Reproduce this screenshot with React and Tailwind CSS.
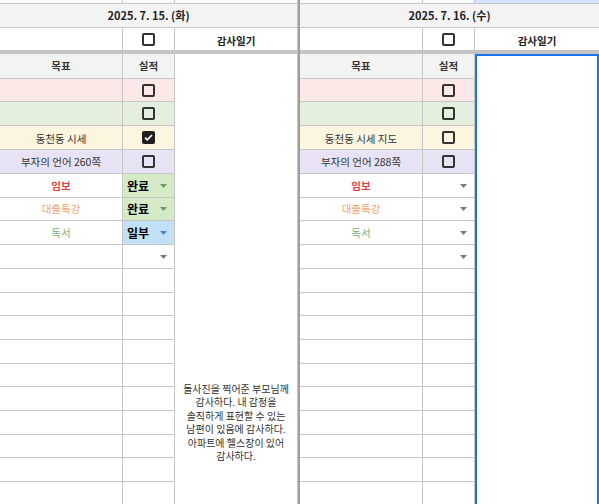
import React from "react";

// grid line colour used by every cell
const LINE = "border-[#c6c6c6]";

const rowHeights = [
  "h-[23px]", "h-[24px]", "h-[24px]", "h-[24px]", "h-[24px]", "h-[23px]",
  "h-[24px]", "h-[24px]", "h-[24px]", "h-[23px]", "h-[24px]", "h-[24px]",
  "h-[23px]", "h-[24px]", "h-[24px]", "h-[23px]", "h-[24px]", "h-[23px]",
];

const days = [
  {
    date: "2025. 7. 15. (화)",
    selected: false,
    goals: [
      { text: "", bg: "bg-[#fce8e6]", checked: false },
      { text: "", bg: "bg-[#e4efde]", checked: false },
      { text: "동천동 시세", bg: "bg-[#fdf6df]", checked: true },
      { text: "부자의 언어 260쪽", bg: "bg-[#e7e3f4]", checked: false },
    ],
    status: [
      { value: "완료", cell: "bg-[#d5ebc8]", arrow: "#6f9a5c" },
      { value: "완료", cell: "bg-[#d5ebc8]", arrow: "#6f9a5c" },
      { value: "일부", cell: "bg-[#c2e1f5]", arrow: "#4a86c5" },
    ],
    diary:
      "돌사진을 찍어준 부모님께 감사하다. 내 감정을 솔직하게 표현할 수 있는 남편이 있음에 감사하다. 아파트에 헬스장이 있어 감사하다.",
  },
  {
    date: "2025. 7. 16. (수)",
    selected: true,
    goals: [
      { text: "", bg: "bg-[#fce8e6]", checked: false },
      { text: "", bg: "bg-[#e4efde]", checked: false },
      { text: "동천동 시세 지도", bg: "bg-[#fdf6df]", checked: false },
      { text: "부자의 언어 288쪽", bg: "bg-[#e7e3f4]", checked: false },
    ],
    status: [
      { value: "", cell: "bg-white", arrow: "#7a7a7a" },
      { value: "", cell: "bg-white", arrow: "#7a7a7a" },
      { value: "", cell: "bg-white", arrow: "#7a7a7a" },
    ],
    diary: "",
  },
];

const habits = [
  { text: "임보", color: "text-[#ee3b3b] font-bold" },
  { text: "대출특강", color: "text-[#f5a36f]" },
  { text: "독서", color: "text-[#79b07c]" },
];

const Arrow = ({ color }) => (
  <svg width="7" height="4" viewBox="0 0 7 4">
    <path d="M0 0h7L3.5 4z" fill={color} />
  </svg>
);

const CheckBox = ({ checked }) =>
  checked ? (
    <span className="flex h-[13px] w-[13px] items-center justify-center rounded-[2px] bg-[#1f1f1f]">
      <svg width="9" height="7" viewBox="0 0 9 7">
        <path d="M1 3.6l2.3 2.2L8 1" fill="none" stroke="white" strokeWidth="1.7" />
      </svg>
    </span>
  ) : (
    <span className="h-[13px] w-[13px] rounded-[2px] border-2 border-[#333]" />
  );

const DayBlock = ({ day }) => {
  const diaryW = day.selected ? "w-[124px]" : "w-[123px]";

  // rows under the header: goals, habits, then blanks
  const rows = [];
  day.goals.forEach((g) => rows.push({ kind: "goal", ...g }));
  habits.forEach((h, i) => rows.push({ kind: "habit", ...h, ...day.status[i] }));
  rows.push({ kind: "dropdown" });
  while (rows.length < rowHeights.length) rows.push({ kind: "blank" });

  return (
    <div className="flex flex-col">
      {/* sheet column header stub */}
      <div className={`flex h-[4px] shrink-0 border-b ${LINE}`}>
        <div className={`w-[123px] border-r bg-[#f8f9fa] ${LINE}`} />
        <div className={`w-[52px] border-r bg-[#f8f9fa] ${LINE}`} />
        <div
          className={
            day.selected ? `${diaryW} bg-[#d3e3fd]` : `${diaryW} border-r bg-[#f8f9fa] ${LINE}`
          }
        />
      </div>

      {/* date */}
      <div
        className={`flex h-[24px] shrink-0 items-center justify-center border-b bg-[#f3f3f3] text-[11px] font-bold text-[#222] ${LINE} ${
          day.selected ? "" : "border-r"
        }`}
      >
        {day.date}
      </div>

      {/* checkbox / 감사일기 */}
      <div className="flex h-[22px] shrink-0">
        <div className={`w-[123px] border-r ${LINE}`} />
        <div className={`flex w-[52px] items-center justify-center border-r ${LINE}`}>
          <CheckBox checked={false} />
        </div>
        <div
          className={`flex ${diaryW} items-end justify-center pb-[1px] text-[10.5px] font-bold text-[#222] ${
            day.selected ? "" : `border-r ${LINE}`
          }`}
        >
          감사일기
        </div>
      </div>

      {/* frozen divider */}
      <div className="h-[4px] shrink-0 bg-[#c4c4c4]" />

      <div className="flex shrink-0">
        <div className="flex w-[175px] flex-col">
          <div className={`flex h-[25px] shrink-0 border-b bg-[#f3f3f3] text-[10.5px] font-semibold text-[#333] ${LINE}`}>
            <div className={`flex w-[123px] items-center justify-center border-r ${LINE}`}>목표</div>
            <div className={`flex w-[52px] items-center justify-center border-r ${LINE}`}>실적</div>
          </div>

          {rows.map((r, i) => (
            <div key={i} className={`flex shrink-0 border-b ${rowHeights[i]} ${LINE} ${r.bg || "bg-white"}`}>
              <div
                className={`flex w-[123px] items-center justify-center border-r text-[10.5px] ${LINE} ${
                  r.color || "text-[#333]"
                } ${r.kind === "goal" && i === 2 ? "pt-[3px]" : ""}`}
              >
                {r.text}
              </div>
              {r.kind === "goal" && (
                <div className={`flex w-[52px] items-center justify-center border-r ${LINE}`}>
                  <CheckBox checked={r.checked} />
                </div>
              )}
              {r.kind === "habit" && (
                <div
                  className={`flex w-[52px] items-center justify-between border-r pl-[4px] pr-[7px] text-[12px] font-bold text-black ${LINE} ${r.cell}`}
                >
                  <span>{r.value}</span>
                  <Arrow color={r.arrow} />
                </div>
              )}
              {r.kind === "dropdown" && (
                <div className={`flex w-[52px] items-center justify-end border-r pr-[7px] ${LINE}`}>
                  <Arrow color="#7a7a7a" />
                </div>
              )}
              {r.kind === "blank" && <div className={`w-[52px] border-r ${LINE}`} />}
            </div>
          ))}
        </div>

        {/* merged diary cell */}
        {day.selected ? (
          <div className={`${diaryW} h-[470px] border-2 border-[#1a73e8] bg-white`} />
        ) : (
          <div
            className={`${diaryW} h-[470px] border-r bg-white px-[3px] pt-[328px] text-center text-[10px] leading-[13.4px] text-[#333] ${LINE}`}
          >
            <p className="break-keep">{day.diary}</p>
          </div>
        )}
      </div>
    </div>
  );
};

export default function App() {
  return (
    <div className="flex h-[504px] w-[599px] overflow-hidden bg-white font-['Noto_Sans_CJK_KR','Noto_Sans',sans-serif]">
      <DayBlock day={days[0]} />
      <div className="w-[2px] shrink-0 bg-[#9e9e9e]" />
      <DayBlock day={days[1]} />
    </div>
  );
}
